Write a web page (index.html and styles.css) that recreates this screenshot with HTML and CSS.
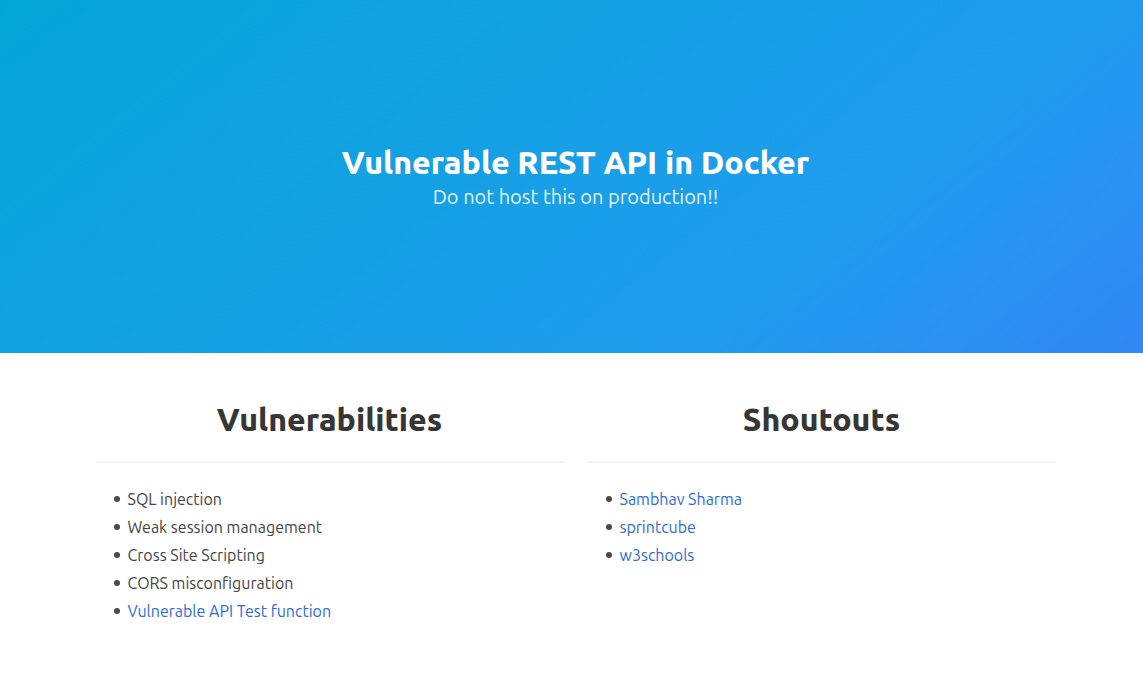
FILE: index.html
```
<!DOCTYPE html>
<html lang="en">
<head>
<meta charset="utf-8">
<meta name="viewport" content="width=device-width, initial-scale=1">
<title>Vulnerable REST API in Docker</title>
<link rel="stylesheet" href="styles.css">
</head>
<body>
<header class="hero">
  <h1 class="hero-title">Vulnerable REST API in Docker</h1>
  <p class="hero-subtitle">Do not host this on production!!</p>
</header>
<main class="content">
  <div class="columns">
    <section class="column">
      <h2 class="column-title">Vulnerabilities</h2>
      <hr class="rule">
      <ul class="list">
        <li>SQL injection</li>
        <li>Weak session management</li>
        <li>Cross Site Scripting</li>
        <li>CORS misconfiguration</li>
        <li><a class="link" href="#">Vulnerable API Test function</a></li>
      </ul>
    </section>
    <section class="column">
      <h2 class="column-title">Shoutouts</h2>
      <hr class="rule">
      <ul class="list">
        <li><a class="link" href="#">Sambhav Sharma</a></li>
        <li><a class="link" href="#">sprintcube</a></li>
        <li><a class="link" href="#">w3schools</a></li>
      </ul>
    </section>
  </div>
</main>
</body>
</html>
```
FILE: styles.css
```
* {
  box-sizing: border-box;
}

body {
  margin: 0;
  background: #fff;
  color: #444;
  font: 400 16px/24px Ubuntu, "Noto Sans", sans-serif;
}

.hero {
  display: flex;
  flex-direction: column;
  align-items: center;
  padding: 144px 24px 142px 32px;
  background: linear-gradient(141deg, #04a6d7 0%, #209cee 71%, #3287f5 100%);
  text-align: center;
}

.hero-title {
  margin: 0;
  color: #fff;
  font-size: 32px;
  line-height: 36px;
  font-weight: 800;
}

.hero-subtitle {
  margin: 3px 0 0;
  color: rgba(255, 255, 255, 0.9);
  font-size: 20px;
  line-height: 28px;
}

.content {
  padding: 48px 24px 48px 32px;
}

.columns {
  display: grid;
  grid-template-columns: 1fr 1fr;
  gap: 24px;
  max-width: 960px;
  margin: 0 auto;
}

.column-title {
  margin: 0;
  color: #363636;
  font-size: 32px;
  line-height: 36px;
  font-weight: 800;
  text-align: center;
}

.rule {
  height: 2px;
  margin: 24px 0;
  border: 0;
  background: #f5f5f5;
}

.list {
  display: grid;
  gap: 4px;
  margin: 0;
  padding-left: 18px;
  list-style: none;
}

.list li {
  display: flex;
  align-items: center;
  gap: 8px;
}

.list li::before {
  content: "";
  width: 6px;
  height: 6px;
  border-radius: 50%;
  background: #4a4a4a;
}

.link {
  color: #2c6ddc;
  text-decoration: none;
}
```
